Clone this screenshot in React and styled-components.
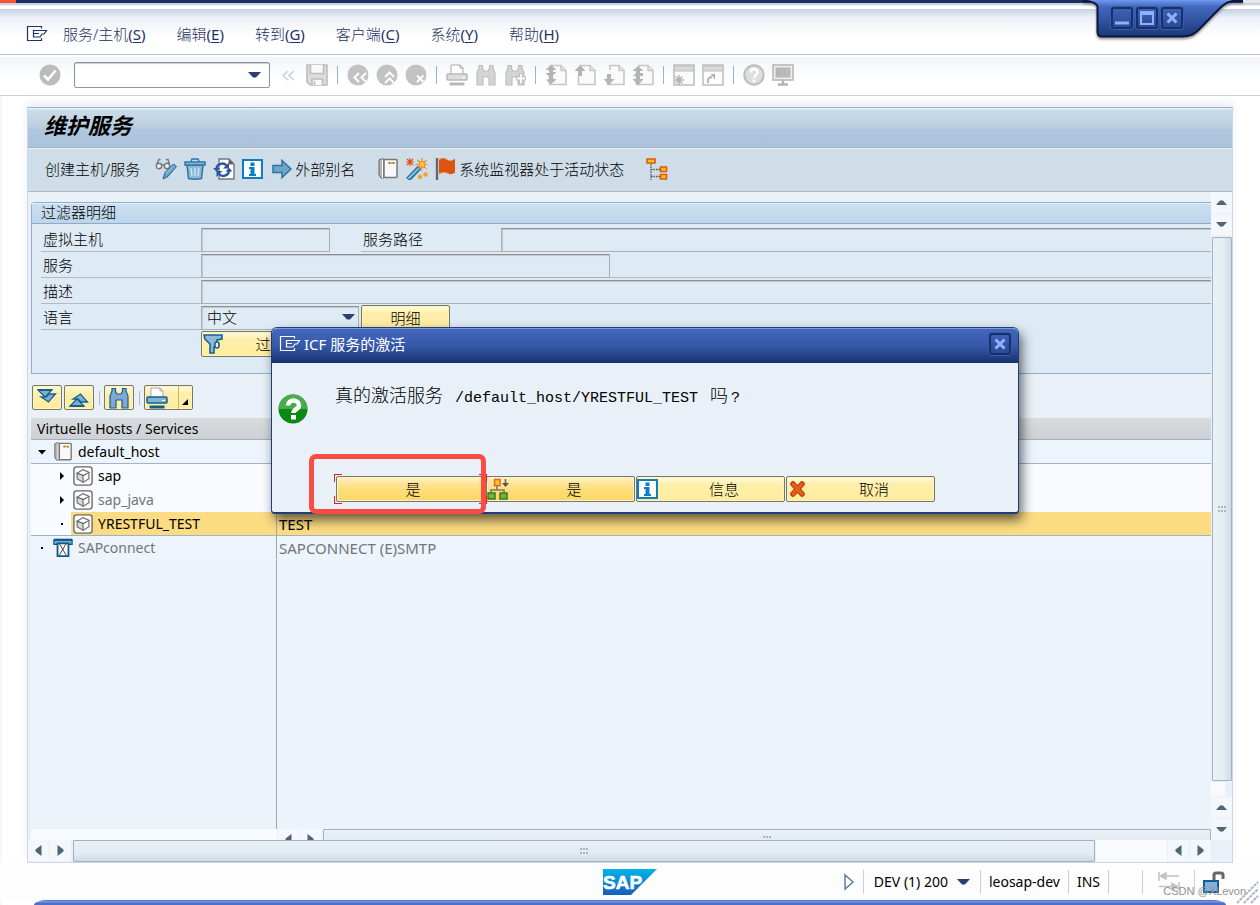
import React, { Component } from 'react';
import styled, { createGlobalStyle, css } from 'styled-components';

const sans = '"Noto Sans", "Noto Sans CJK SC", sans-serif';

const GlobalStyle = createGlobalStyle`
    * {
        box-sizing: border-box;
    }
    body {
        margin: 0;
        background: #fff;
        color: #000;
        font-family: ${sans};
        font-size: 15px;
        line-height: 20px;
    }
    button, input, select {
        font: inherit;
        color: inherit;
        margin: 0;
    }
`;

/* ---------- icons ---------- */

const Svg = ({ size = 22, children, ...rest }) => (
    <svg width={size} height={size} viewBox="0 0 22 22" fill="none" aria-hidden="true" {...rest}>{children}</svg>
);

const MenuIcon = () => (
    <Svg stroke="currentColor" strokeWidth="1.200">
        <path d="M15.500 5.500V3.500H1.500V17.500h14V15" />
        <path d="M7.500 7.500H20.500L18 11h-2l-2 3H7.500zM8 10.500h5" />
    </Svg>
);

const CheckIcon = () => (
    <Svg>
        <circle cx="11" cy="11" r="10.500" fill="#bcbcbc" />
        <path d="M5 11.500l4 4 7.500-9" stroke="#fff" strokeWidth="2.600" />
    </Svg>
);

const CollapseIcon = () => (
    <Svg stroke="#cfcfcf" strokeWidth="1.500">
        <path d="M11 7l-5 4.500 5 4.500M17 7l-5 4.500 5 4.500" />
    </Svg>
);

const SaveIcon = () => (
    <Svg stroke="#bdbdbd" strokeWidth="1.600">
        <path d="M1 1h20v20H4l-3-3z" fill="#dcdcdc" />
        <path d="M4.500 1v8.500h13V1" fill="#fafafa" />
        <path d="M6 21v-6h10.500v6" fill="#fafafa" />
        <path d="M8.500 17v4" />
    </Svg>
);

const RoundIcon = ({ d }) => (
    <Svg>
        <circle cx="11" cy="11" r="10.500" fill="#c2c2c2" />
        <path d={d} stroke="#fff" strokeWidth="2" />
    </Svg>
);

const PrintIcon = ({ stroke = '#b8b8b8', fill = '#dcdcdc', bar = '#b8b8b8' }) => (
    <Svg stroke={stroke}>
        <path d="M5 10V1h9l3 3v6" fill="#fff" stroke="#a8a8a8" />
        <path d="M14 1v3h3" stroke="#a8a8a8" />
        <rect x="1" y="10" width="20" height="6" rx="1" fill={fill} strokeWidth="1.500" />
        <path d="M3.500 20h15" stroke={bar} strokeWidth="3" />
        <path d="M16 13.500h3" stroke="#fff" />
    </Svg>
);

const FindIcon = ({ stroke = '#bebebe', fill = '#d4d4d4', plus }) => (
    <Svg stroke={stroke} strokeWidth="1.200" fill={fill}>
        <path d="M4 4V1.500h3.500v3l1.500 2.500h4L14.500 4.500v-3H18V4l2 5v12h-6v-8h-6v8H2V9z" />
        {plus && <path d="M15.500 9.500h3v3.500h3v3h-3v4h-3v-4h-3v-3h3z" fill="#fff" />}
    </Svg>
);

const PageIcon = ({ up, down, double }) => (
    <Svg>
        <path d="M7 6V1.500h9L21 6.500v14H4.500V12" fill="#fafafa" stroke="#c6c6c6" strokeWidth="1.600" />
        <path d="M16 1.500v5h5" fill="#e6e6e6" stroke="#c6c6c6" strokeWidth="1.400" />
        {up && <path d="M0.500 7L6 1l5.500 6H8v5H4V7z" fill="#b4b4b4" />}
        {down && <path d="M0.500 15L6 21l5.500-6H8v-5H4v5z" fill="#b4b4b4" />}
        {double && <path d={double} fill="#b4b4b4" />}
    </Svg>
);

const SessionIcon = ({ children }) => (
    <Svg>
        <rect x="1" y="1" width="20" height="20" fill="#fcfcfc" stroke="#bdbdbd" strokeWidth="1.500" />
        <path d="M1 2h20v5H1z" fill="#d9d9d9" stroke="#bdbdbd" />
        {children}
    </Svg>
);

const HelpIcon = () => (
    <Svg>
        <circle cx="11" cy="11" r="9.700" fill="#dedede" stroke="#bcbcbc" strokeWidth="2" />
        <path d="M7.500 8.500c0-4.500 7-4.500 7 0 0 2.500-3.500 2.500-3.500 5.500" stroke="#fff" strokeWidth="2.600" />
        <path d="M9.700 15.500h2.600v2.500H9.700z" fill="#fff" />
    </Svg>
);

const MonitorIcon = () => (
    <Svg>
        <rect x="1" y="1" width="20" height="15" fill="#eee" stroke="#b4b4b4" strokeWidth="1.500" />
        <path d="M3.500 3.500h15v10h-15z" fill="#b6b6b6" />
        <path d="M9 3.500h2v10H9zM14 3.500h2v10h-2z" fill="#bebebe" />
        <path d="M11 16v4M6 20.500h10" stroke="#b4b4b4" strokeWidth="2.500" />
    </Svg>
);

const EditIcon = () => (
    <Svg>
        <g stroke="#777" strokeWidth="1.400">
            <circle cx="4" cy="8" r="2.700" fill="#e8eef2" />
            <circle cx="12" cy="8" r="2.700" fill="#e8eef2" />
            <path d="M6.500 7.500q1.500-1 3 0M1.500 6.500L4 1.500h1.500M14.500 6.500L13 1.500h-2" />
        </g>
        <path d="M8 21l2-6.500L18.500 6l3 2.500-8.500 10z" fill="#6aa2c9" stroke="#22638f" />
        <path d="M11 15.500l7-7" stroke="#b5d5ea" />
    </Svg>
);

const TrashIcon = () => (
    <Svg stroke="#2c75a4" strokeWidth="1.500">
        <path d="M3 7h16l-1.500 13.500q-6.500 1.500-13 0z" fill="#8db9d8" />
        <path d="M1 4h20v3H1z" fill="#8db9d8" />
        <path d="M7 3.500l1-2.500h6l1 2.500" />
        <path d="M7 10l1 8M11 10v8M15 10l-1 8" stroke="#d8e9f5" strokeWidth="1.200" />
    </Svg>
);

const RefreshIcon = () => (
    <Svg>
        <path d="M6 1h10l5 5v15H6z" fill="#fff" stroke="#777" strokeWidth="1.400" />
        <path d="M16 1v5h5z" fill="#555" stroke="#777" />
        <path d="M3.500 10.500c0.500-5 7-6.500 10-3" stroke="#2d55a5" strokeWidth="2.400" />
        <path d="M16 4.500v6h-6zM0 10h7l-3.500 3.800z" fill="#2d55a5" />
        <path d="M16 13c-0.500 5-7 6.500-10 3" stroke="#2d55a5" strokeWidth="2.400" />
        <path d="M3.500 19v-6h6zM12.500 13.500h7L16 9.700z" fill="#2d55a5" />
    </Svg>
);

const InfoIcon = () => (
    <Svg>
        <rect x="1" y="2" width="19" height="18" fill="#fff" stroke="#0a7fc2" strokeWidth="2" />
        <path d="M8.500 4.500h4V8h-4zM7 9h5.500v7H14v2H7v-2h1.500v-5H7z" fill="#0a7fc2" />
    </Svg>
);

const ArrowIcon = () => (
    <Svg>
        <path d="M2 7.500h9V2.500L20 11l-9 8.500v-5H2z" fill="#6ea6cb" stroke="#2b73a3" strokeWidth="1.500" />
    </Svg>
);

const ServerIcon = ({ size }) => (
    <Svg size={size}>
        <path d="M2 2l2-1h3v19H4l-2-3z" fill="#b5b5b5" stroke="#666" />
        <path d="M5.500 1.500V20" stroke="#fff" />
        <rect x="7" y="1.500" width="13" height="18" rx="1" fill="#f8f8f8" stroke="#777" strokeWidth="1.500" />
        <path d="M11.500 4h2v2h-2z" fill="#e44" />
        <path d="M13.500 4h2v2h-2z" fill="#f5b400" />
        <path d="M15.500 4h2v2h-2z" fill="#3a3" />
    </Svg>
);

const WandIcon = () => (
    <Svg>
        <path d="M2 21.500L13.500 9.500" stroke="#25709f" strokeWidth="5" />
        <path d="M2.500 20.500L13 10" stroke="#8fc0e0" strokeWidth="2" />
        <path d="M16 0v13M9.500 6.500h13M11.500 2l9 9M20.500 2l-9 9" stroke="#e98418" strokeWidth="1.200" strokeDasharray="3 1" />
        <circle cx="16" cy="6.500" r="3" fill="#ffd029" stroke="#ee7a16" />
        <path d="M4 0v8M0 4h8M1 1l6 6M7 1L1 7" stroke="#e0571c" strokeWidth="1.200" />
        <circle cx="14" cy="19" r="2.200" fill="#f3a21a" />
        <circle cx="19.500" cy="16.500" r="2.200" fill="#f3a21a" />
    </Svg>
);

const FlagIcon = () => (
    <Svg>
        <path d="M2 0v22" stroke="#666" strokeWidth="2.400" />
        <path d="M4 1.500q4-3 8 0t8-1v14q-4 3-8 0.500t-8 1z" fill="#dc5510" />
        <path d="M4 1.500q4-3 8 0M12 15q-4-2-8 1" stroke="#f08a4a" />
    </Svg>
);

const HierarchyIcon = () => (
    <Svg>
        <path d="M5 6v16M5 11.500h9M5 18.500h9" stroke="#555" strokeWidth="1.300" strokeDasharray="1.500 1" />
        <g fill="#ffc21a" stroke="#dd5a10" strokeWidth="1.600">
            <path d="M1 1h8v4H1z" />
            <path d="M14.500 9h6v4.500h-6zM14.500 16.500h6V21h-6z" />
        </g>
    </Svg>
);

const FilterIcon = () => (
    <Svg stroke="#156394" strokeWidth="1.600" fill="#8cb8dc">
        <path d="M2 2h18v4l-5 1v6q-1 1-3 1v6H8v-9L3 6z" />
        <rect x="13" y="9" width="4" height="6" rx="2" fill="#fff2ad" />
    </Svg>
);

const DoubleArrowIcon = ({ flip }) => (
    <Svg stroke="#12608f" fill="#7fb0d4" transform={flip ? 'scale(1 -1)' : undefined}>
        <path d="M2 3h14l-7 7z" strokeWidth="1.300" />
        <path d="M5 10h5l3-3h6.500l-7 8z" strokeWidth="1.300" />
        <path d="M2 3h14" strokeWidth="2" />
    </Svg>
);

const BoxIcon = ({ size }) => (
    <Svg size={size}>
        <rect x="1" y="1" width="20" height="20" rx="3" fill="#fbfbfb" stroke="#6a6a6a" strokeWidth="1.500" />
        <g stroke="#666" strokeWidth="1.200">
            <path d="M4.500 8l6.500-4 6.500 3-6 3.500z" fill="#fff" />
            <path d="M4.500 8v6l6.500 4v-7.500z" fill="#d9d9d9" />
            <path d="M17.500 7v7L11 18" />
        </g>
    </Svg>
);

const ConnectIcon = ({ size }) => (
    <Svg size={size}>
        <path d="M1 2h20v5H1z" fill="#7fabcf" stroke="#0c5a8c" strokeWidth="1.400" />
        <path d="M1 2h20" stroke="#0c5a8c" strokeWidth="2.500" />
        <path d="M5 6h12v14H5z" fill="#fff" stroke="#0c5a8c" strokeWidth="2" />
        <path d="M7 6l7.500 13M14.500 6L7 19" stroke="#333" />
    </Svg>
);

const QuestionIcon = () => (
    <svg width="30" height="30" viewBox="0 0 30 30" fill="none" aria-hidden="true">
        <circle cx="15" cy="15" r="14.500" fill="#0a8a12" />
        <path d="M0.500 15a14.500 14.500 0 0 1 29 0z" fill="#49ab4d" />
        <path d="M10 11.500c0-7 11-6.500 11 0 0 4-5.500 3.500-5.500 7.500" stroke="#fff" strokeWidth="4.500" />
        <path d="M13 21h5v4.500h-5z" fill="#fff" />
    </svg>
);

const OrgIcon = () => (
    <Svg>
        <path d="M10 8v4M4 16v-4h13v4" stroke="#777" strokeWidth="1.600" />
        <path d="M7.500 1.500h5.500v6H7.500z" fill="#ffc72a" stroke="#dd6a18" strokeWidth="1.500" />
        <path d="M1 15h7v6H1zM13 15h7v6h-7z" fill="#79b52a" stroke="#3a7a28" strokeWidth="1.500" />
        <path d="M18.500 1v6" stroke="#666" strokeWidth="1.600" />
        <path d="M15 5h7l-3.500 4z" fill="#555" />
    </Svg>
);

const CancelIcon = () => (
    <Svg>
        <path d="M6 6l9 10M15 6L6 16" stroke="#b8350f" strokeWidth="5.500" strokeLinecap="round" />
        <path d="M6 6l9 10M15 6L6 16" stroke="#e2601c" strokeWidth="3.400" strokeLinecap="round" />
    </Svg>
);

const CloseGlyph = () => (
    <svg width="12" height="12" viewBox="0 0 12 12" aria-hidden="true">
        <path d="M1.500 1.500l9 9M10.500 1.500l-9 9" stroke="#8fb0ff" strokeWidth="3" />
    </svg>
);

const arrowPaths = {
    up: 'M1 9h11L8 4.500H5z',
    down: 'M1 4h11L8 8.500H5z',
    left: 'M9.500 1v11L3.500 7.500v-2z',
    right: 'M3.500 1v11l6-4.500v-2z',
};

const Triangle = ({ dir }) => (
    <svg width="13" height="13" viewBox="0 0 13 13" aria-hidden="true">
        <path d={arrowPaths[dir]} fill="#4f6475" />
    </svg>
);

const DropGlyph = () => (
    <svg width="13" height="8" viewBox="0 0 13 8" aria-hidden="true">
        <path d="M0 1h13L8 6.500H5z" fill="#2c3f75" />
    </svg>
);

/* ---------- pieces ---------- */

const ArrowButton = ({ dir, label }) => (
    <ScrollButton type="button" aria-label={label}><Triangle dir={dir} /></ScrollButton>
);

const menus = [
    ['服务/主机', 'S'],
    ['编辑', 'E'],
    ['转到', 'G'],
    ['客户端', 'C'],
    ['系统', 'Y'],
    ['帮助', 'H'],
];

const tools = [
    ['保存', <SaveIcon />],
    null,
    ['返回', <RoundIcon d="M12 9l-4.500 4.500L12 18M19 9l-4.500 4.500L19 18" />],
    ['退出', <RoundIcon d="M9 13l4.500-4.500L18 13M9 19l4.500-4.500L18 19" />],
    ['取消', <RoundIcon d="M12 11.500l6.500 6.500M18.500 11.500L12 18" />],
    null,
    ['打印', <PrintIcon />],
    ['查找', <FindIcon />],
    ['查找下一个', <FindIcon plus />],
    null,
    ['首页', <PageIcon double="M0.500 6L6 0.500 11.500 6H8v2h3.500L8 11.500v3l3.500 1-5.500 4.500-5.500-4.500H4v-3L0.500 9H4V6z" />],
    ['上一页', <PageIcon up />],
    ['下一页', <PageIcon down />],
    ['末页', <PageIcon double="M0.500 7L6 2l5.500 5H8v2h3v3H8v3h3.500L6 21.500.500 15H4v-3H1L4 9V7z" />],
    null,
    ['创建会话', <SessionIcon><path d="M6 11v10M1 16h10M2.500 12.500l7 7M9.500 12.500l-7 7" stroke="#b4b4b4" strokeWidth="1.600" /></SessionIcon>],
    ['生成快捷方式', <SessionIcon><path d="M6 19c-1-4 1-6 4-6" stroke="#b0b0b0" strokeWidth="2" /><path d="M8.500 10H13v5.500z" fill="#b0b0b0" /></SessionIcon>],
    null,
    ['帮助', <HelpIcon />],
    ['定制本地布局', <MonitorIcon />],
];

const rows = [
    { name: 'default_host', icon: <ServerIcon size={20} />, mark: 'open', line: true },
    { name: 'sap', icon: <BoxIcon size={20} />, mark: 'closed', child: true },
    { name: 'sap_java', icon: <BoxIcon size={20} />, mark: 'closed', child: true, muted: true },
    { name: 'YRESTFUL_TEST', text: 'TEST', icon: <BoxIcon size={20} />, mark: 'leaf', child: true, selected: true, line: true },
    { name: 'SAPconnect', text: 'SAPCONNECT (E)SMTP', icon: <ConnectIcon size={20} />, mark: 'leaf', muted: true },
];

const marks = {
    open: 'M0 2h8L4 6.500z',
    closed: 'M2 0v8l4-4z',
    leaf: 'M3 3h2v2H3z',
};

const Mark = ({ kind }) => (
    <svg width="8" height="8" viewBox="0 0 8 8" aria-hidden="true"><path d={marks[kind]} /></svg>
);

class App extends Component {

    renderHeader() {
        return (
            <>
                <TopEdge />
                <WindowTab>
                    <svg width="180" height="44" viewBox="0 0 180 44" aria-hidden="true">
                        <defs>
                            <linearGradient id="tab" x1="0" y1="0" x2="0" y2="1">
                                <stop offset="0" stopColor="#6f98ee" />
                                <stop offset="0.180" stopColor="#4269bf" />
                                <stop offset="1" stopColor="#1d387b" />
                            </linearGradient>
                        </defs>
                        <path d="M3 0C11 0 16 3 17.500 6V32q0 4.500 4.500 4.500h80c9 0 13-3 17-7L138 10c6-6 9-8.500 15-9.500V0z" fill="url(#tab)" />
                        <path d="M3 1C11 1 16 3 17.500 6V32q0 4.500 4.500 4.500h80c9 0 13-3 17-7L138 10c6-6 9-8 15-9h10" fill="none" stroke="#0b1a3c" strokeWidth="2" />
                    </svg>
                    <WindowButtons>
                        <WindowButton type="button" aria-label="最小化">
                            <svg width="14" height="14" viewBox="0 0 14 14"><path d="M0 12h14" stroke="#8fb0ff" strokeWidth="3" /></svg>
                        </WindowButton>
                        <WindowButton type="button" aria-label="最大化">
                            <svg width="14" height="14" viewBox="0 0 14 14"><path d="M1 1h12v12H1zM1 3h12" fill="none" stroke="#8fb0ff" strokeWidth="2" /></svg>
                        </WindowButton>
                        <WindowButton type="button" aria-label="关闭"><CloseGlyph /></WindowButton>
                    </WindowButtons>
                </WindowTab>
                <MenuBar>
                    <MenuButton type="button" aria-label="系统菜单"><MenuIcon /></MenuButton>
                    {menus.map(([name, key]) => (
                        <MenuButton type="button" key={key}>{name}<b>(<u>{key}</u>)</b></MenuButton>
                    ))}
                </MenuBar>
                <Toolbar>
                    <CommandGroup>
                        <IconButton type="button" aria-label="输入"><CheckIcon /></IconButton>
                        <Command>
                            <input aria-label="命令" type="text" />
                            <DropGlyph />
                        </Command>
                    </CommandGroup>
                    <IconButton type="button" aria-label="折叠"><CollapseIcon /></IconButton>
                    {tools.map((tool, i) => tool
                        ? <IconButton type="button" key={i} aria-label={tool[0]}>{tool[1]}</IconButton>
                        : <Separator key={i} />
                    )}
                </Toolbar>
            </>
        );
    }

    renderFilter() {
        return (
            <Group>
                <GroupTitle>过滤器明细</GroupTitle>
                <Form>
                    <FormRow>
                        <Label htmlFor="host">虚拟主机</Label>
                        <Field id="host" $width="129px" />
                        <Label htmlFor="path" $second>服务路径</Label>
                        <Field id="path" $open />
                    </FormRow>
                    <FormRow>
                        <Label htmlFor="service">服务</Label>
                        <Field id="service" $width="409px" />
                        <Rule />
                    </FormRow>
                    <FormRow>
                        <Label htmlFor="description">描述</Label>
                        <Field id="description" $open />
                    </FormRow>
                    <FormRow>
                        <Label htmlFor="language">语言</Label>
                        <SelectBox>
                            <select id="language" defaultValue="ZH">
                                <option value="ZH">中文</option>
                            </select>
                            <DropGlyph />
                        </SelectBox>
                        <YellowButton type="button" $width="89px">明细</YellowButton>
                    </FormRow>
                    <FormRow>
                        <Blank />
                        <YellowButton type="button" $width="112px">
                            <FilterIcon /><span>过滤</span>
                        </YellowButton>
                    </FormRow>
                </Form>
            </Group>
        );
    }

    renderTree() {
        return (
            <>
                <TreeTools>
                    <ToolButton type="button" aria-label="展开"><DoubleArrowIcon /></ToolButton>
                    <ToolButton type="button" aria-label="折叠"><DoubleArrowIcon flip /></ToolButton>
                    <ToolDivider />
                    <ToolButton type="button" aria-label="查找"><FindIcon stroke="#12608f" fill="#7fa9d0" /></ToolButton>
                    <ToolDivider />
                    <ToolButton type="button" aria-label="打印" $split>
                        <PrintIcon stroke="#12608f" fill="#84b1d8" bar="#12608f" />
                        <i><svg width="6" height="6" viewBox="0 0 6 6"><path d="M6 0v6H0z" /></svg></i>
                    </ToolButton>
                </TreeTools>
                <Tree>
                    <colgroup>
                        <col width="246" />
                        <col />
                    </colgroup>
                    <thead>
                        <tr>
                            <th>Virtuelle Hosts / Services</th>
                            <th />
                        </tr>
                    </thead>
                    <tbody>
                        {rows.map(row => (
                            <TreeRow key={row.name} $child={row.child} $line={row.line} $selected={row.selected} $muted={row.muted}>
                                <td>
                                    <Node $child={row.child}>
                                        <Mark kind={row.mark} />
                                        <NodeLabel $selected={row.selected}>
                                            {row.icon}<span>{row.name}</span>
                                        </NodeLabel>
                                    </Node>
                                </td>
                                <td>{row.text}</td>
                            </TreeRow>
                        ))}
                    </tbody>
                </Tree>
                <TreeFill><div /></TreeFill>
                <TreeScroll>
                    <div />
                    <ArrowButton dir="left" label="列向左" />
                    <ArrowButton dir="right" label="列向右" />
                    <Thumb><Grip /></Thumb>
                </TreeScroll>
            </>
        );
    }

    renderDialog() {
        return (
            <Dialog role="dialog" aria-labelledby="dialog-title">
                <DialogHead>
                    <MenuIcon />
                    <span id="dialog-title">ICF 服务的激活</span>
                    <WindowButton type="button" aria-label="关闭"><CloseGlyph /></WindowButton>
                </DialogHead>
                <DialogBody>
                    <QuestionIcon />
                    <Message>真的激活服务<code> /default_host/YRESTFUL_TEST </code>吗<code>?</code></Message>
                </DialogBody>
                <DialogButtons>
                    <FocusFrame>
                        <YellowButton type="button" $width="149px" $strong><span>是</span></YellowButton>
                    </FocusFrame>
                    <YellowButton type="button" $width="149px" $strong><OrgIcon /><span>是</span></YellowButton>
                    <YellowButton type="button" $width="149px"><InfoIcon /><span>信息</span></YellowButton>
                    <YellowButton type="button" $width="149px"><CancelIcon /><span>取消</span></YellowButton>
                </DialogButtons>
                <Highlight />
            </Dialog>
        );
    }

    renderStatus() {
        return (
            <StatusBar>
                <span />
                <svg width="54" height="26" viewBox="0 0 54 26" role="img" aria-label="SAP">
                    <defs>
                        <linearGradient id="logo" x1="0" y1="0" x2="0" y2="1">
                            <stop offset="0" stopColor="#00b4ee" />
                            <stop offset="1" stopColor="#1a5cbc" />
                        </linearGradient>
                    </defs>
                    <path d="M0 0h54L28 26H0z" fill="url(#logo)" />
                    <text x="0" y="20" fill="#fff" stroke="#fff" strokeWidth="0.600" fontFamily="Liberation Sans, sans-serif" fontWeight="bold" fontSize="19">SAP</text>
                </svg>
                <StatusInfo>
                    <StatusCell>
                        <svg width="12" height="18" viewBox="0 0 12 18"><path d="M2 2v14l8-7z" fill="#fff" stroke="#5d7f9f" strokeWidth="1.500" /></svg>
                    </StatusCell>
                    <StatusCell $width="117px">DEV (1) 200<DropGlyph /></StatusCell>
                    <StatusCell>leosap-dev</StatusCell>
                    <StatusCell>INS</StatusCell>
                    <StatusCell $width="34px" />
                    <StatusCell $width="52px">
                        <Svg stroke="#c2c2c2" strokeWidth="1.500">
                            <path d="M1 1v9M3 5h18M21 11v9M1 15.500h18" />
                            <path d="M8 2L2.500 5 8 8zM14 12.500l5.500 3-5.500 3z" fill="#c2c2c2" />
                        </Svg>
                    </StatusCell>
                    <StatusCell>
                        <Svg>
                            <path d="M11 10V4q0-2 2-2h5q2 0 2 2v4" stroke="#666" strokeWidth="3" />
                            <rect x="1" y="10" width="14" height="11" fill="#84b1d8" stroke="#12608f" strokeWidth="2" />
                        </Svg>
                    </StatusCell>
                </StatusInfo>
                <Watermark>CSDN @XLevon</Watermark>
                <SizeGrip width="24" height="24" viewBox="0 0 24 24" aria-hidden="true">
                    <path d="M1 23L22 2M8 23L22 9M15 23l7-7" stroke="#a9b4c6" strokeWidth="2" strokeDasharray="3 1" />
                </SizeGrip>
            </StatusBar>
        );
    }

    render() {
        return (
            <Page>
                <GlobalStyle />
                {this.renderHeader()}
                <Frame>
                    <Title>维护服务</Title>
                    <AppToolbar>
                        <TextButton type="button" $end="8px">创建主机/服务</TextButton>
                        <IconButton type="button" aria-label="显示/更改"><EditIcon /></IconButton>
                        <IconButton type="button" aria-label="删除"><TrashIcon /></IconButton>
                        <IconButton type="button" aria-label="刷新"><RefreshIcon /></IconButton>
                        <IconButton type="button" aria-label="信息"><InfoIcon /></IconButton>
                        <TextButton type="button" $end="15px"><ArrowIcon />外部别名</TextButton>
                        <IconButton type="button" aria-label="主机"><ServerIcon /></IconButton>
                        <IconButton type="button" aria-label="向导"><WandIcon /></IconButton>
                        <TextButton type="button" $end="15px"><FlagIcon />系统监视器处于活动状态</TextButton>
                        <IconButton type="button" aria-label="层次"><HierarchyIcon /></IconButton>
                    </AppToolbar>
                    <Work>
                        <Content>
                            {this.renderFilter()}
                            {this.renderTree()}
                        </Content>
                        <ScrollColumn>
                            <ArrowButton dir="up" label="上" />
                            <ArrowButton dir="down" label="下" />
                            <Thumb $vertical><Grip /></Thumb>
                            <Track $size="14px" />
                            <ArrowButton dir="up" label="上一页" />
                            <ArrowButton dir="down" label="下一页" />
                        </ScrollColumn>
                    </Work>
                    <ScrollLine>
                        <ArrowButton dir="left" label="左" />
                        <ArrowButton dir="right" label="右" />
                        <Thumb><Grip /></Thumb>
                        <Track $size="71px" />
                        <ArrowButton dir="left" label="左移" />
                        <ArrowButton dir="right" label="右移" />
                    </ScrollLine>
                </Frame>
                {this.renderStatus()}
                <BottomEdge />
                {this.renderDialog()}
            </Page>
        );
    }
}

export default App;

const Page = styled.div`
    position: relative;
    display: flex;
    flex-direction: column;
    min-height: 100vh;
    overflow: hidden;
    background: linear-gradient(to right, #f7f7f9 2px, #fff 2px);
`

const TopEdge = styled.div`
    height: 9px;
    background:
        linear-gradient(to right, #f8532c 16px, transparent 16px) 0 0 / 100% 3px no-repeat,
        linear-gradient(to right, #182f66 calc(100% - 17px), #e4e6ea calc(100% - 17px)) 0 0 / 100% 3px no-repeat,
        linear-gradient(#bfcadb 3px, #d5dde9 5px, #fff 6px);
`

const WindowTab = styled.div`
    position: absolute;
    top: 0;
    right: 0;

    > svg {
        filter: drop-shadow(0 2px 1px rgba(60, 50, 55, 0.5));
    }
`

const WindowButtons = styled.div`
    position: absolute;
    top: 7px;
    left: 31px;
    display: flex;
    gap: 3px;
`

const WindowButton = styled.button`
    display: flex;
    align-items: center;
    justify-content: center;
    width: 22px;
    height: 22px;
    padding: 0;
    border: 2px solid #16306a;
    border-radius: 3px;
    background: linear-gradient(#3c61b3, #2a4a93);
    box-shadow: 0 0 0 1px #3a5cab;
`

const MenuBar = styled.nav`
    display: flex;
    align-items: center;
    gap: 31px;
    height: 46px;
    padding: 4px 26px 0;
    border-bottom: 1px solid #bcc8d8;
    background: linear-gradient(#c6d0e4, #eef1f7 9px, #fff 28px);
    color: #1e3264;
    font-weight: 300;

    button:first-child {
        margin-right: -16px;
    }
`

const bare = css`
    display: flex;
    align-items: center;
    padding: 0;
    border: 0;
    background: none;
    white-space: nowrap;
`

const MenuButton = styled.button`
    ${bare}

    b {
        font-weight: 400;
    }
    u {
        text-underline-offset: 2px;
    }
`

const IconButton = styled.button`
    ${bare}
    flex: none;
`

const TextButton = styled.button`
    ${bare}
    gap: 2px;
    margin-right: ${props => props.$end};
`

const Toolbar = styled.div`
    display: flex;
    align-items: center;
    gap: 7px;
    height: 41px;
    padding: 0 39px;
    border-bottom: 1px solid #c9d0e0;
    background: linear-gradient(#fff 2px, #f2f5f9 2px, #fff 26px);
`

const CommandGroup = styled.div`
    display: flex;
    align-items: center;
    gap: 13px;
`

const Command = styled.div`
    display: flex;
    align-items: center;
    width: 196px;
    height: 26px;
    padding-right: 8px;
    border: 1px solid #8f959b;
    border-radius: 2px;
    background: #fff;
    box-shadow: inset 0 1px 1px #c8ccd0;

    input {
        flex: 1;
        min-width: 0;
        border: 0;
        outline: 0;
        background: none;
    }
`

const Separator = styled.i`
    width: 5px;
    height: 18px;
    background: linear-gradient(#8fb6da, #8fb6da) center / 1px 100% no-repeat;
`

const Frame = styled.main`
    flex: 1;
    display: flex;
    flex-direction: column;
    margin: 11px 27px 0 27px;
    border: 1px solid #d0d6e2;
    border-top-color: #9fb0c6;
    background: #e9f0f7;
    box-shadow: 0 -4px 8px #e9edf5;
`

const Title = styled.h1`
    height: 40px;
    margin: 0;
    padding: 0 16px;
    border-bottom: 1px solid #a3b4c8;
    background: linear-gradient(#e6eef6 1px, #cbdbe8 2px, #bcd0df 18px, #afc7df 22px, #abc2db);
    font-size: 22px;
    font-style: italic;
    line-height: 34px;
`

const AppToolbar = styled.div`
    display: flex;
    align-items: center;
    gap: 7px;
    height: 44px;
    padding: 0 17px 2px;
    border-top: 1px solid #eaf1f6;
    border-bottom: 1px solid #a9b8c8;
    background: #cfdde8;
    font-weight: 300;
`

const Work = styled.div`
    flex: 1;
    display: flex;
`

const Content = styled.div`
    flex: 1;
    min-width: 0;
    display: flex;
    flex-direction: column;
    padding: 10px 0 0 3px;
`

const Group = styled.section`
    height: 172px;
    border: 1px solid #8fb0cc;
    border-right: 0;
    border-top-left-radius: 4px;
    background: #dfebf4;
`

const GroupTitle = styled.h2`
    height: 21px;
    margin: 0;
    padding: 0 9px;
    border-bottom: 1px solid #8faac8;
    border-top: 1px solid #e3f0f9;
    background: linear-gradient(#cbdff0, #bdd5ea);
    font-size: 15px;
    font-weight: 300;
    line-height: 16px;
`

const Form = styled.div`
    display: flex;
    flex-direction: column;
    gap: 2px;
    padding: 4px 0 0 9px;
    font-weight: 300;
`

const FormRow = styled.div`
    display: flex;
    align-items: center;
    height: 24px;
`

const Label = styled.label`
    width: ${props => props.$second ? '140px' : '160px'};
    height: 24px;
    margin-left: ${props => props.$second ? '31px' : '0'};
    padding: 1px 2px;
    border-bottom: 1px solid #b3b9be;
`

const Blank = styled.div`
    width: 160px;
`

const sunken = css`
    height: 24px;
    border: 1px solid #aaafb4;
    border-top-color: #8c9094;
    background: #dfebf4;
    box-shadow: inset 1px 1px 1px #c0c8ce;
`

const Field = styled.input.attrs({ type: 'text' })`
    ${sunken}
    width: ${props => props.$width};
    padding: 0 4px;
    ${props => props.$open && 'flex: 1; border-right: 0;'}
`

const Rule = styled.div`
    flex: 1;
    height: 24px;
    border-bottom: 1px solid #b3b9be;
`

const SelectBox = styled.div`
    ${sunken}
    display: flex;
    align-items: center;
    width: 158px;
    margin-right: 2px;
    padding: 0 3px 2px 5px;

    select {
        flex: 1;
        appearance: none;
        padding: 0;
        border: 0;
        outline: 0;
        background: none;
    }
`

const raised = css`
    border: 1px solid #77786a;
    border-radius: 2px;
    background: linear-gradient(#fffbe0, #ffefac 7px, #ffec9c);
    box-shadow: inset 0 0 0 1px #fff3bd;
`

const YellowButton = styled.button`
    ${raised}
    display: flex;
    align-items: center;
    justify-content: center;
    flex: none;
    width: ${props => props.$width};
    height: 26px;
    padding: 0;
    white-space: nowrap;
    ${props => props.$strong && 'background: linear-gradient(#fff3cc, #fee394 7px, #fedc72 15px, #fcd667);'}

    span {
        flex: 1;
        padding-left: 5px;
    }
`

const TreeTools = styled.div`
    display: flex;
    align-items: center;
    gap: 2px;
    height: 44px;
    padding: 3px 1px 0;
`

const ToolButton = styled.button`
    ${raised}
    display: flex;
    align-items: center;
    justify-content: ${props => props.$split ? 'flex-start' : 'center'};
    width: ${props => props.$split ? '49px' : '30px'};
    height: 25px;
    padding: 0 1px;

    i {
        display: flex;
        align-items: flex-end;
        align-self: stretch;
        margin-left: auto;
        padding: 4px 3px;
        border-left: 1px solid #c7b469;
    }
`

const ToolDivider = styled.i`
    width: 6px;
    height: 14px;
    background: linear-gradient(#b4bcc4, #b4bcc4) center / 1px 100% no-repeat;
`

const Tree = styled.table`
    width: 100%;
    table-layout: fixed;
    border-collapse: separate;
    border-spacing: 0;
    font-size: 14px;

    th {
        height: 22px;
        padding: 0 6px;
        border-bottom: 1px solid #a6aeb9;
        background: linear-gradient(#d9dcde, #cdd1d6);
        font-weight: normal;
        text-align: left;
    }
`

const TreeRow = styled.tr`
    height: 24px;
    color: ${props => props.$muted ? '#737679' : '#000'};
    background: ${props => props.$child ? '#f8fbff' : '#edf4fc'};

    td {
        padding: 0;
        border-bottom: 1px solid ${props => props.$line ? '#9db4cc' : 'transparent'};
    }
    td:first-child {
        border-right: 1px solid #98a8ba;
    }
    td:last-child {
        padding-left: 2px;
        font-size: 15px;
        ${props => props.$selected && 'background: #fcdc82;'}
    }
`

const Node = styled.div`
    display: flex;
    align-items: center;
    gap: 5px;
    height: 23px;
    padding-left: ${props => props.$child ? '27px' : '7px'};

    > svg {
        flex: none;
        fill: #000;
    }
`

const NodeLabel = styled.div`
    flex: 1;
    display: flex;
    align-items: center;
    gap: 5px;
    height: 100%;
    padding-left: 2px;
    background: ${props => props.$selected ? '#fcdc82' : 'none'};
`

const TreeFill = styled.div`
    flex: 1;
    background: #ecf3fb;

    div {
        width: 246px;
        height: 100%;
        border-right: 1px solid #98a8ba;
    }
`

const TreeScroll = styled.div`
    display: flex;
    gap: 1px;
    height: 11px;
    overflow: hidden;
    background: #eef3f9;

    > div:first-child {
        width: 246px;
        background: #f8fbff;
    }
`

const ScrollButton = styled.button`
    display: flex;
    align-items: center;
    justify-content: center;
    flex: none;
    width: 21px;
    height: 21px;
    padding: 0;
    border: 0;
    background: #f4f7fb;
`

const Thumb = styled.div`
    flex: 1;
    display: flex;
    align-items: center;
    justify-content: center;
    min-height: 20px;
    margin: ${props => props.$vertical ? '1px 0 0 1px' : '0 0 0 1px'};
    border: 1px solid #a3b2c0;
    border-radius: 1px;
    background: linear-gradient(${props => props.$vertical ? 'to right' : 'to bottom'}, #eaf1f7, #e3ebf3 60%, #cfdbe7);
`

const Grip = styled.i`
    width: 9px;
    height: 6px;
    background: linear-gradient(to right, #a8b5c2 2px, transparent 2px) 0 0 / 3px 2px repeat-x,
        linear-gradient(to right, #a8b5c2 2px, transparent 2px) 0 4px / 3px 2px repeat-x;
`

const Track = styled.div`
    flex: none;
    width: ${props => props.$size};
    height: ${props => props.$size};
    max-width: 100%;
    max-height: 100%;
    background: #f9fafc;
`

const ScrollColumn = styled.div`
    display: flex;
    flex-direction: column;
    gap: 1px;
    width: 21px;
`

const ScrollLine = styled.div`
    display: flex;
    gap: 1px;
    height: 22px;
    padding-right: 21px;
`

const StatusBar = styled.footer`
    position: relative;
    display: grid;
    grid-template-columns: 1fr auto 1fr;
    align-items: center;
    height: 37px;
    background: #fdfdfd;
    font-size: 14px;
`

const StatusInfo = styled.div`
    display: flex;
    align-items: center;
    justify-content: flex-end;
    padding-right: 27px;
`

const StatusCell = styled.div`
    display: flex;
    align-items: center;
    justify-content: center;
    gap: 9px;
    width: ${props => props.$width};
    height: 24px;
    padding: 0 8px;
    border-left: 1px solid #ccd1d8;
    white-space: nowrap;

    &:first-child {
        border-left: 0;
    }
    svg {
        flex: none;
    }
`

const Watermark = styled.span`
    position: absolute;
    right: 14px;
    bottom: 1px;
    color: #8f9297;
    font-family: "Liberation Sans", sans-serif;
    font-size: 11px;
    line-height: 16px;
`

const SizeGrip = styled.svg`
    position: absolute;
    right: 0;
    bottom: -4px;
`

const BottomEdge = styled.div`
    height: 5px;
    margin: 0 34px;
    border-radius: 14px 14px 0 0 / 5px 5px 0 0;
    background: linear-gradient(#4a68b4, #7ea0e8 2px, #4a6ec9 3px);
`

const Dialog = styled.section`
    position: absolute;
    top: 327px;
    left: 271px;
    width: 748px;
    border: 1px solid #1f3c7d;
    border-bottom-width: 2px;
    border-radius: 6px 6px 4px 4px;
    background: #e9f0f7;
    box-shadow: 3px 6px 12px rgba(0, 0, 0, 0.6);
    font-weight: 300;
`

const DialogHead = styled.header`
    display: flex;
    align-items: center;
    gap: 3px;
    height: 35px;
    padding: 0 7px 4px;
    border-top: 1px solid #7b9de0;
    border-radius: 5px 5px 0 0;
    background: linear-gradient(#4467bd, #3558a8 50%, #17316e);
    color: #fff;
    font-weight: 400;

    span {
        flex: 1;
    }
`

const DialogBody = styled.div`
    display: flex;
    gap: 27px;
    height: 111px;
    padding: 22px 6px;

    svg {
        flex: none;
        margin-top: 9px;
    }
`

const Message = styled.p`
    margin: 0;
    font-size: 18px;
    white-space: pre;

    code {
        padding: 0 3px;
        font-family: "Liberation Mono", monospace;
        font-size: 15px;
    }
`

const DialogButtons = styled.div`
    display: flex;
    gap: 1px;
    padding: 2px 0 10px 64px;
`

const corner = '#e02020';

const FocusFrame = styled.div`
    position: relative;

    &::before {
        content: '';
        position: absolute;
        inset: -2px;
        background:
            linear-gradient(to right, ${corner} 8px, transparent 8px calc(100% - 8px), ${corner} calc(100% - 8px)) top / 100% 1px no-repeat,
            linear-gradient(to right, ${corner} 8px, transparent 8px calc(100% - 8px), ${corner} calc(100% - 8px)) bottom / 100% 1px no-repeat,
            linear-gradient(${corner} 8px, transparent 8px calc(100% - 8px), ${corner} calc(100% - 8px)) left / 1px 100% no-repeat,
            linear-gradient(${corner} 8px, transparent 8px calc(100% - 8px), ${corner} calc(100% - 8px)) right / 1px 100% no-repeat;
        pointer-events: none;
    }
`

const Highlight = styled.div`
    position: absolute;
    left: 37px;
    bottom: -2px;
    width: 177px;
    height: 60px;
    border: 5px solid #fb4b47;
    border-radius: 7px;
    pointer-events: none;
`
